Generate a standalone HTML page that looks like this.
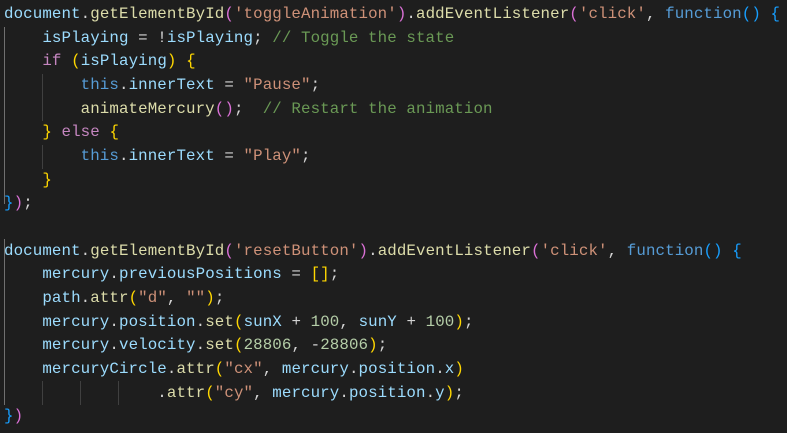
<!DOCTYPE html>
<html><head><meta charset="utf-8"><style>
html,body{margin:0;padding:0;background:#1e1e1e;width:787px;height:433px;overflow:hidden}
pre{margin:0;position:absolute;left:4px;top:3px;font-family:"Liberation Mono",monospace;font-size:15.8px;letter-spacing:0.1px;line-height:23.65px;color:#d4d4d4;white-space:pre}
.v{color:#9cdcfe}.f{color:#dcdcaa}.s{color:#ce9178}.k{color:#c586c0}.b{color:#569cd6}.c{color:#6a9955}.n{color:#b5cea8}
.g{color:#ffd700}.o{color:#da70d6}.l{color:#179fff}
.guide{position:absolute;width:1px;background:#404040}
</style></head><body>
<div class="guide" style="left:4px;top:27px;height:177px;background:#707070"></div>
<div class="guide" style="left:42px;top:74px;height:47px"></div>
<div class="guide" style="left:42px;top:145px;height:24px"></div>
<div class="guide" style="left:4px;top:239px;height:166px;background:#707070"></div>
<div class="guide" style="left:42px;top:381px;height:24px"></div>
<div class="guide" style="left:80px;top:381px;height:24px"></div>
<div class="guide" style="left:118px;top:381px;height:24px"></div>
<pre><span class="v">document</span>.<span class="f">getElementById</span><span class="o">(</span><span class="s">'toggleAnimation'</span><span class="o">)</span>.<span class="f">addEventListener</span><span class="o">(</span><span class="s">'click'</span>, <span class="b">function</span><span class="l">()</span> <span class="l">{</span>
    <span class="v">isPlaying</span> = !<span class="v">isPlaying</span>; <span class="c">// Toggle the state</span>
    <span class="k">if</span> <span class="g">(</span><span class="v">isPlaying</span><span class="g">)</span> <span class="g">{</span>
        <span class="b">this</span>.<span class="v">innerText</span> = <span class="s">"Pause"</span>;
        <span class="f">animateMercury</span><span class="o">()</span>;  <span class="c">// Restart the animation</span>
    <span class="g">}</span> <span class="k">else</span> <span class="g">{</span>
        <span class="b">this</span>.<span class="v">innerText</span> = <span class="s">"Play"</span>;
    <span class="g">}</span>
<span class="l">}</span><span class="o">)</span>;

<span class="v">document</span>.<span class="f">getElementById</span><span class="o">(</span><span class="s">'resetButton'</span><span class="o">)</span>.<span class="f">addEventListener</span><span class="o">(</span><span class="s">'click'</span>, <span class="b">function</span><span class="l">()</span> <span class="l">{</span>
    <span class="v">mercury</span>.<span class="v">previousPositions</span> = <span class="g">[]</span>;
    <span class="v">path</span>.<span class="f">attr</span><span class="g">(</span><span class="s">"d"</span>, <span class="s">""</span><span class="g">)</span>;
    <span class="v">mercury</span>.<span class="v">position</span>.<span class="f">set</span><span class="g">(</span><span class="v">sunX</span> + <span class="n">100</span>, <span class="v">sunY</span> + <span class="n">100</span><span class="g">)</span>;
    <span class="v">mercury</span>.<span class="v">velocity</span>.<span class="f">set</span><span class="g">(</span><span class="n">28806</span>, -<span class="n">28806</span><span class="g">)</span>;
    <span class="v">mercuryCircle</span>.<span class="f">attr</span><span class="g">(</span><span class="s">"cx"</span>, <span class="v">mercury</span>.<span class="v">position</span>.<span class="v">x</span><span class="g">)</span>
                .<span class="f">attr</span><span class="g">(</span><span class="s">"cy"</span>, <span class="v">mercury</span>.<span class="v">position</span>.<span class="v">y</span><span class="g">)</span>;
<span class="l">}</span><span class="o">)</span></pre>
</body></html>
